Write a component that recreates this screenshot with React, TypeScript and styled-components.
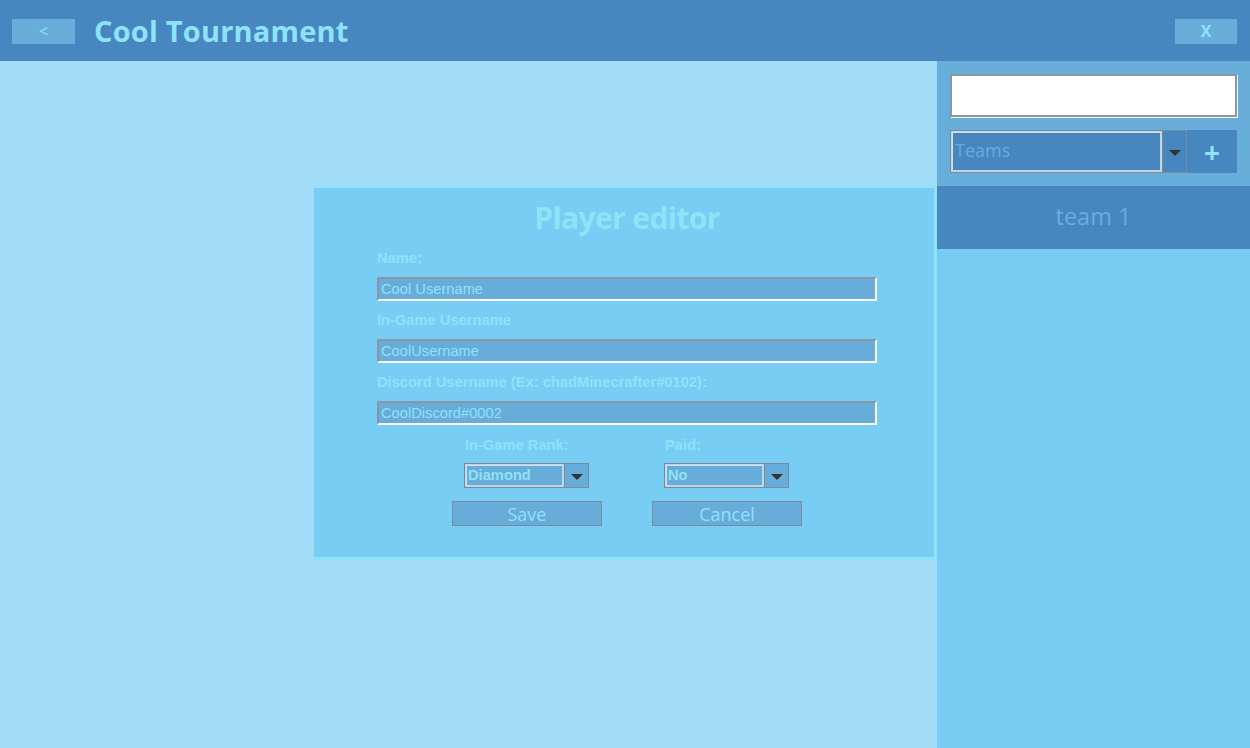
import React from "react";
import styled, { createGlobalStyle } from "styled-components";

const GlobalStyle = createGlobalStyle`
  html, body { margin: 0; padding: 0; }
  body { background: #a2dcf6; font-family: "Open Sans", sans-serif; }
  * { box-sizing: border-box; }
`;

const Page = styled.div`
  width: 1250px;
  height: 748px;
  display: flex;
  flex-direction: column;
  overflow: hidden;
`;

const Header = styled.header`
  height: 61px;
  background: #4886c0;
  display: flex;
  align-items: center;
  padding: 0 13px 0 12px;
`;

const HeaderButton = styled.button<{ bold?: boolean }>`
  width: ${(p) => (p.bold ? 62 : 63)}px;
  height: 25px;
  border: none;
  background: #69aedb;
  color: #8de3f9;
  font-family: "Open Sans", sans-serif;
  font-size: 16px;
  font-weight: ${(p) => (p.bold ? 700 : 400)};
  padding: 0;
  display: flex;
  align-items: center;
  justify-content: center;
  margin-top: 1px;
`;

const Title = styled.h1`
  margin: 0 0 0 19px;
  flex: 1;
  color: #8de3f9;
  font-family: "Open Sans", sans-serif;
  font-weight: 700;
  font-size: 29px;
  letter-spacing: 0.2px;
`;

const Body = styled.div`
  flex: 1;
  display: flex;
`;

const Main = styled.main`
  flex: 1;
  background: #a2dcf6;
  padding: 125px 0 0 314px;
`;

const Modal = styled.section`
  width: 623px;
  height: 374px;
  background: #78cdf4;
  border-top: 2px solid #8fe3f7;
  border-right: 3px solid #8fe3f7;
  border-bottom: 3px solid #8fe3f7;
  display: flex;
  flex-direction: column;
`;

const ModalTitle = styled.h2`
  margin: 10px 0 0 0;
  text-align: center;
  color: #8fe3f7;
  font-family: "Open Sans", sans-serif;
  font-weight: 700;
  font-size: 30px;
  line-height: 40px;
  letter-spacing: -0.6px;
  padding-left: 6px;
`;

const Form = styled.div`
  padding-left: 63px;
  width: 563px;
  display: flex;
  flex-direction: column;
  margin-top: 12px;
`;

const Label = styled.label`
  display: block;
  height: 16px;
  line-height: 16px;
  color: #8de3f9;
  font-family: "Liberation Sans", Arial, sans-serif;
  font-weight: 700;
  font-size: 14.7px;
  margin-bottom: 11px;
`;

const TextInput = styled.div`
  width: 500px;
  height: 24px;
  background: #68acda;
  border-top: 2px solid #8a97a3;
  border-left: 2px solid #8a97a3;
  border-right: 2px solid #ffffff;
  border-bottom: 2px solid #ffffff;
  color: #8de3f9;
  font-family: "Liberation Sans", Arial, sans-serif;
  font-size: 14.7px;
  line-height: 20px;
  padding-left: 2px;
  margin-bottom: 11px;
`;

const Row = styled.div`
  display: flex;
  gap: 75px;
  padding-left: 150px;
  margin-top: 1px;
`;

const Field = styled.div`
  display: flex;
  flex-direction: column;
  width: 125px;
  align-items: flex-start;
`;

const SmallLabel = styled(Label)`
  margin: 0 0 10px 1px;
  white-space: nowrap;
`;

const Select = styled.div<{ w: number; h: number; dark?: boolean }>`
  width: ${(p) => p.w}px;
  height: ${(p) => p.h}px;
  display: flex;
  border: 1px solid #7d8b99;
  background: ${(p) => (p.dark ? "#4886c0" : "#68acda")};
`;

const SelectValue = styled.div<{ big?: boolean }>`
  flex: 1;
  border: 2px solid #bfd6e6;
  border-width: 1px 2px 2px 1px;
  box-shadow: inset 1px 1px 0 #d0e2ee;
  color: ${(p) => (p.big ? "#67aedb" : "#8de3f9")};
  font-family: ${(p) =>
    p.big ? `"Open Sans", sans-serif` : `"Liberation Sans", Arial, sans-serif`};
  font-weight: ${(p) => (p.big ? 400 : 700)};
  font-size: ${(p) => (p.big ? "18px" : "14.7px")};
  display: flex;
  align-items: center;
  padding-left: ${(p) => (p.big ? "3px" : "2px")};
  padding-bottom: ${(p) => (p.big ? "3px" : "0")};
`;

const Arrow = styled.div`
  width: 24px;
  display: flex;
  align-items: center;
  justify-content: center;
  border-left: 1px solid #7d8b99;
  &::after {
    content: "";
    border-left: 6px solid transparent;
    border-right: 6px solid transparent;
    border-top: 6px solid #333333;
    margin-top: 2px;
  }
`;

const Buttons = styled.div`
  display: flex;
  gap: 50px;
  padding-left: 138px;
  margin-top: 13px;
`;

const ActionButton = styled.button`
  width: 150px;
  height: 25px;
  background: #68acda;
  border: 1px solid #7d8b99;
  color: #8de3f9;
  font-family: "Open Sans", sans-serif;
  font-size: 18px;
  line-height: 20px;
  padding: 0;
`;

const Sidebar = styled.aside`
  width: 313px;
  background: #78ccf4;
  display: flex;
  flex-direction: column;
`;

const SidebarTop = styled.div`
  height: 125px;
  background: #67aedb;
  padding: 13px 13px 0 13px;
  display: flex;
  flex-direction: column;
  gap: 13px;
`;

const SearchBox = styled.div`
  height: 43px;
  background: #ffffff;
  border: 2px solid #8a97a3;
  box-shadow: 1px 1px 0 #ffffff;
`;

const FilterRow = styled.div`
  display: flex;
`;

const PlusButton = styled.button`
  width: 50px;
  height: 43px;
  border: none;
  background: #4886c0;
  color: #8de3f9;
  font-family: "Open Sans", sans-serif;
  font-size: 28px;
  font-weight: 700;
  line-height: 40px;
  padding: 0;
`;

const TeamItem = styled.div`
  height: 63px;
  background: #4886c0;
  color: #67aedb;
  font-family: "Open Sans", sans-serif;
  font-size: 23.5px;
  display: flex;
  align-items: center;
  justify-content: center;
  padding-bottom: 4px;
`;

export default function App() {
  return (
    <Page>
      <GlobalStyle />
      <Header>
        <HeaderButton>&lt;</HeaderButton>
        <Title>Cool Tournament</Title>
        <HeaderButton bold>X</HeaderButton>
      </Header>
      <Body>
        <Main>
          <Modal>
            <ModalTitle>Player editor</ModalTitle>
            <Form>
              <Label>Name:</Label>
              <TextInput>Cool Username</TextInput>
              <Label>In-Game Username</Label>
              <TextInput>CoolUsername</TextInput>
              <Label>Discord Username (Ex: chadMinecrafter#0102):</Label>
              <TextInput>CoolDiscord#0002</TextInput>
            </Form>
            <Row>
              <Field>
                <SmallLabel>In-Game Rank:</SmallLabel>
                <Select w={125} h={25}>
                  <SelectValue>Diamond</SelectValue>
                  <Arrow />
                </Select>
              </Field>
              <Field>
                <SmallLabel>Paid:</SmallLabel>
                <Select w={125} h={25}>
                  <SelectValue>No</SelectValue>
                  <Arrow />
                </Select>
              </Field>
            </Row>
            <Buttons>
              <ActionButton>Save</ActionButton>
              <ActionButton>Cancel</ActionButton>
            </Buttons>
          </Modal>
        </Main>
        <Sidebar>
          <SidebarTop>
            <SearchBox />
            <FilterRow>
              <Select w={237} h={43} dark>
                <SelectValue big>Teams</SelectValue>
                <Arrow />
              </Select>
              <PlusButton>+</PlusButton>
            </FilterRow>
          </SidebarTop>
          <TeamItem>team 1</TeamItem>
        </Sidebar>
      </Body>
    </Page>
  );
}
